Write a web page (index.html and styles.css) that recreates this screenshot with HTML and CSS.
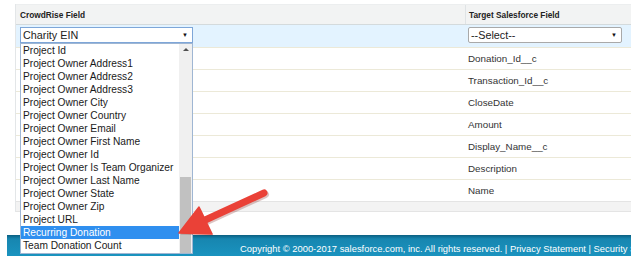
FILE: index.html
```html
<!DOCTYPE html>
<html>
<head>
<meta charset="utf-8">
<link rel="stylesheet" href="styles.css">
</head>
<body>
<div class="page">
  <div class="panel">
    <div class="row head">
      <div class="cell c1">CrowdRise Field</div>
      <div class="cell c2">Target Salesforce Field</div>
    </div>
    <div class="row sel-row">
      <div class="cell c1">
        <div class="select focus"><span>Charity EIN</span><span class="arr">&#9660;</span></div>
      </div>
      <div class="cell c2">
        <div class="select target"><span>--Select--</span><span class="arr">&#9660;</span></div>
      </div>
    </div>
    <div class="row data"><div class="cell c1"></div><div class="cell c2">Donation_Id__c</div></div>
    <div class="row data"><div class="cell c1"></div><div class="cell c2">Transaction_Id__c</div></div>
    <div class="row data"><div class="cell c1"></div><div class="cell c2">CloseDate</div></div>
    <div class="row data"><div class="cell c1"></div><div class="cell c2">Amount</div></div>
    <div class="row data"><div class="cell c1"></div><div class="cell c2">Display_Name__c</div></div>
    <div class="row data"><div class="cell c1"></div><div class="cell c2">Description</div></div>
    <div class="row data last"><div class="cell c1"></div><div class="cell c2">Name</div></div>
    <div class="panel-foot"></div>
  </div>
  <div class="footer">
    <div class="footer-text">Copyright &copy; 2000-2017 salesforce.com, inc. All rights reserved. | Privacy Statement | Security Statement</div>
  </div>
</div>

<div class="dropdown">
  <div class="items">
    <div class="item">Project Id</div>
    <div class="item">Project Owner Address1</div>
    <div class="item">Project Owner Address2</div>
    <div class="item">Project Owner Address3</div>
    <div class="item">Project Owner City</div>
    <div class="item">Project Owner Country</div>
    <div class="item">Project Owner Email</div>
    <div class="item">Project Owner First Name</div>
    <div class="item">Project Owner Id</div>
    <div class="item">Project Owner Is Team Organizer</div>
    <div class="item">Project Owner Last Name</div>
    <div class="item">Project Owner State</div>
    <div class="item">Project Owner Zip</div>
    <div class="item">Project URL</div>
    <div class="item active">Recurring Donation</div>
    <div class="item">Team Donation Count</div>
  </div>
  <div class="scrollbar">
    <div class="up"></div>
    <div class="track"><div class="thumb"></div></div>
  </div>
</div>

<svg class="callout" width="638" height="265" viewBox="0 0 638 265">
  <g transform="translate(1.5,1.5)" opacity="0.25">
    <line x1="264" y1="193" x2="203" y2="221" stroke="#7a1a14" stroke-width="7" stroke-linecap="round"/>
    <polygon points="179,233 199,207 212,234" fill="#7a1a14"/>
  </g>
  <line x1="264" y1="193" x2="203" y2="221" stroke="#ea4137" stroke-width="7" stroke-linecap="round"/>
  <polygon points="179,233 199,207 212,234" fill="#ea4137" stroke="#ea4137" stroke-width="1.5" stroke-linejoin="round"/>
</svg>
</body>
</html>
```

FILE: styles.css
```css
html, body {
  margin: 0;
  padding: 0;
  background: #ffffff;
  font-family: "Liberation Sans", Arial, sans-serif;
  width: 638px;
  height: 265px;
  overflow: hidden;
}

.page {
  padding-top: 4px;
}

.panel {
  margin-left: 15px;
  width: 616px;
  border-left: 1px solid #e3e6e8;
  box-sizing: border-box;
}

.row {
  display: grid;
  grid-template-columns: 449px 166px;
  box-sizing: border-box;
}

.cell {
  display: flex;
  align-items: center;
  box-sizing: border-box;
}

.head {
  height: 21px;
  background: #f2f3f3;
  border-top: 1px solid #eceeef;
  border-bottom: 1px solid #d4dadc;
  font-size: 8.3px;
  font-weight: bold;
  color: #222;
}

.head .c1 {
  padding-left: 4px;
}

.head .c2 {
  border-left: 1px solid #dfe3e5;
  padding-left: 3px;
}

.sel-row {
  height: 23px;
  background: #e3f3ff;
  border-bottom: 1px solid #ece9d8;
  align-items: center;
}

.sel-row .c1 {
  padding-left: 4px;
}

.sel-row .c2 {
  padding-left: 3px;
}

.select {
  height: 16px;
  box-sizing: border-box;
  background: #fff;
  display: flex;
  align-items: center;
  justify-content: space-between;
  font-size: 10.8px;
  color: #222;
  padding: 0 4px 0 2px;
  margin-top: -2px;
}

.select.focus {
  width: 173px;
  border: 1px solid #7ea6d8;
}

.select.target {
  width: 154px;
  border: 1px solid #a9a9a9;
  border-radius: 2px;
}

.arr {
  font-size: 6px;
  color: #111;
}

.data {
  height: 22px;
  border-bottom: 1px solid #ece9d8;
  font-size: 9.8px;
  color: #333;
}

.data .c2 {
  padding-left: 3px;
}

.data.last {
  height: 21px;
  border-bottom: none;
}

.panel-foot {
  height: 11px;
  box-sizing: border-box;
  background: #f3f3f3;
  border-top: 1px solid #e4e4e4;
  border-bottom: 1px solid #e4e4e4;
}

.footer {
  margin-top: 23px;
  margin-left: 7px;
  width: 624px;
  height: 21px;
  overflow: hidden;
  background: linear-gradient(#0c5f80 0, #10739a 2px, #1786b0 4px, #1a93bf 100%);
  position: relative;
}

.footer-text {
  position: absolute;
  left: 233px;
  top: 8px;
  white-space: nowrap;
  font-size: 9.4px;
  color: #ffffff;
}

.dropdown {
  position: absolute;
  left: 20px;
  top: 43px;
  width: 173px;
  height: 211px;
  box-sizing: border-box;
  border: 1px solid #9fb6d3;
  background: #fff;
  display: flex;
}

.items {
  width: 158px;
}

.item {
  height: 13px;
  line-height: 13px;
  font-size: 10.2px;
  color: #1a1a1a;
  padding-left: 2px;
  white-space: nowrap;
}

.item.active {
  background: #2f8fef;
  color: #fff;
}

.scrollbar {
  width: 13px;
  background: #f0f0f0;
  display: flex;
  flex-direction: column;
}

.up {
  height: 12px;
  position: relative;
}

.up::after {
  content: "";
  position: absolute;
  left: 4px;
  top: 4px;
  border-left: 3px solid transparent;
  border-right: 3px solid transparent;
  border-bottom: 3px solid #505050;
}

.track {
  flex: 1;
  display: flex;
  flex-direction: column;
  justify-content: flex-end;
}

.thumb {
  height: 76px;
  margin: 0 1px;
  background: #c1c1c1;
}

.callout {
  position: absolute;
  left: 0;
  top: 0;
  pointer-events: none;
}
```
